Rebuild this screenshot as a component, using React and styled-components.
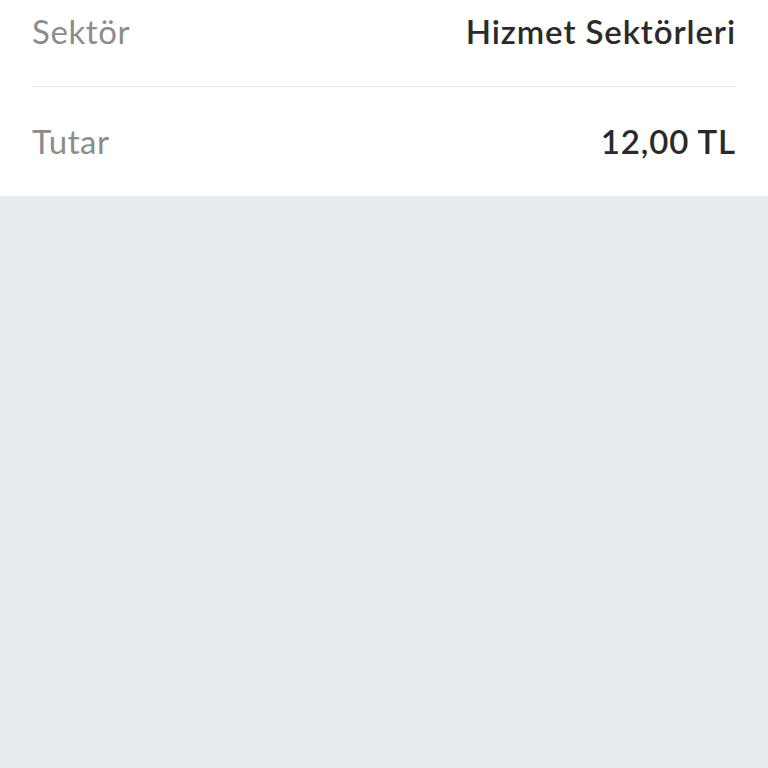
import React from "react";
import styled, { createGlobalStyle } from "styled-components";

const GlobalStyle = createGlobalStyle`
  html, body {
    margin: 0;
    padding: 0;
    background: #e6ebee;
    font-family: Lato, "Noto Sans", sans-serif;
  }
`;

const Page = styled.div`
  width: 768px;
  height: 768px;
  overflow: hidden;
  background: #e6ebee;
`;

const Panel = styled.section`
  background: #ffffff;
  padding: 0 32px;
  margin-top: -23px;
`;

const Row = styled.div`
  height: 109px;
  display: flex;
  align-items: center;
  justify-content: space-between;
  border-bottom: ${(p) => (p.$last ? "none" : "1px solid #e8e8e8")};
`;

const Label = styled.span`
  font-size: 33px;
  letter-spacing: 0.6px;
  color: #8c8c8c;
  font-weight: 400;
  margin-top: -2px;
`;

const Value = styled.span`
  font-size: 33px;
  letter-spacing: 0.9px;
  color: #2a2a2a;
  font-weight: 600;
  margin-top: -2px;
`;

const rows = [
  { label: "Sektör", value: "Hizmet Sektörleri" },
  { label: "Tutar", value: "12,00 TL" },
];

const App = () => {
  return (
    <Page>
      <GlobalStyle />
      <Panel>
        {rows.map((r, i) => (
          <Row key={r.label} $last={i === rows.length - 1}>
            <Label>{r.label}</Label>
            <Value>{r.value}</Value>
          </Row>
        ))}
      </Panel>
    </Page>
  );
};

export default App;
